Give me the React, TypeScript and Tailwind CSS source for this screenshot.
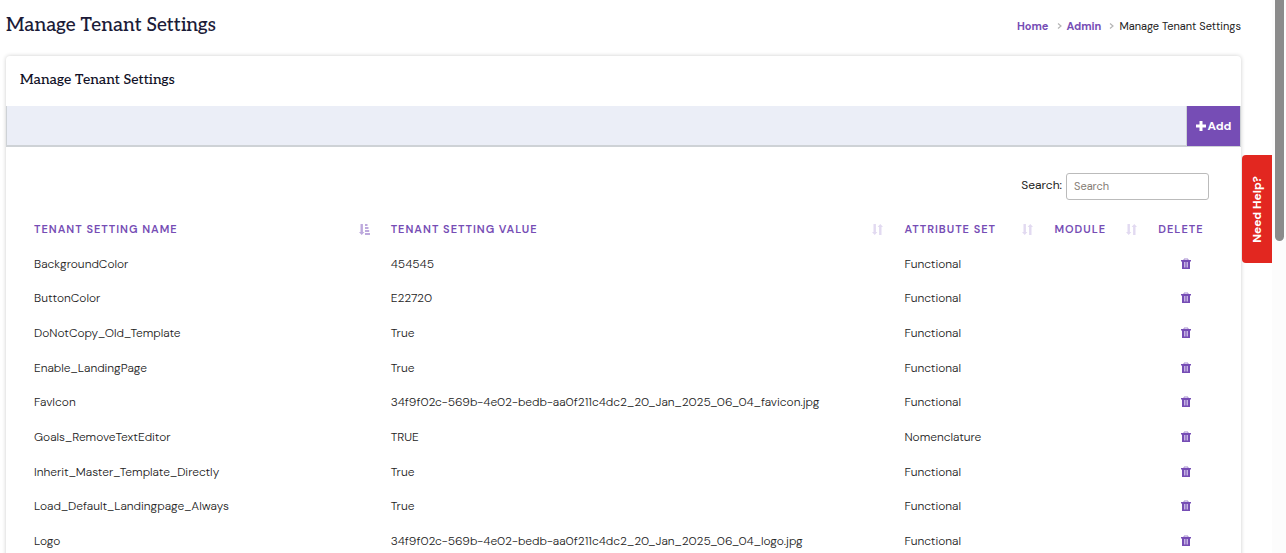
import React from 'react';

type Setting = { name: string; value: string; set: string };

const settings: Setting[] = [
  { name: 'BackgroundColor', value: '454545', set: 'Functional' },
  { name: 'ButtonColor', value: 'E22720', set: 'Functional' },
  { name: 'DoNotCopy_Old_Template', value: 'True', set: 'Functional' },
  { name: 'Enable_LandingPage', value: 'True', set: 'Functional' },
  { name: 'FavIcon', value: '34f9f02c-569b-4e02-bedb-aa0f211c4dc2_20_Jan_2025_06_04_favicon.jpg', set: 'Functional' },
  { name: 'Goals_RemoveTextEditor', value: 'TRUE', set: 'Nomenclature' },
  { name: 'Inherit_Master_Template_Directly', value: 'True', set: 'Functional' },
  { name: 'Load_Default_Landingpage_Always', value: 'True', set: 'Functional' },
  { name: 'Logo', value: '34f9f02c-569b-4e02-bedb-aa0f211c4dc2_20_Jan_2025_06_04_logo.jpg', set: 'Functional' },
];

function SortIcon({ active = false }: { active?: boolean }) {
  return (
    <svg viewBox="0 0 11 11" className={active ? 'h-[11px] w-[11px] text-[#bda9dd]' : 'h-[11px] w-[11px] text-[#e2daf1]'} fill="currentColor" aria-hidden="true">
      <path d="M1.500 0h2.400v8H5.400L2.700 11 0 8h1.500z" />
      {active ? (
        <path d="M6 0h2.500v2H6zM6 3h3.500v2H6zM6 6h4.200v2H6zM6 9h5v2H6z" />
      ) : (
        <path d="M7.100 11h2.400V3H11L8.300 0 5.600 3h1.500z" />
      )}
    </svg>
  );
}

function TrashIcon() {
  return (
    <svg viewBox="0 0 10 12" className="h-3 w-2.5" aria-hidden="true">
      <path d="M3 2V1h4v1" fill="none" stroke="#a58bd0" strokeWidth="1" />
      <path d="M0 2h10v1.500H9V11H1V3.500H0z" fill="#764db5" />
      <path d="M3.500 4v5.500M5 4v5.500M6.500 4v5.500" stroke="#dccff0" strokeWidth=".8" />
    </svg>
  );
}

function PlusIcon() {
  return (
    <svg viewBox="0 0 10 10" className="h-2.5 w-2.5" fill="currentColor" aria-hidden="true">
      <path d="M3.500 0h3v3.500H10v3H6.500V10h-3V6.500H0v-3h3.500z" />
    </svg>
  );
}

function Chevron() {
  return (
    <svg viewBox="0 0 6 8" className="mr-1 ml-2 h-2 w-1.5" fill="none" stroke="#b5b5b5" strokeWidth="1.2" aria-hidden="true">
      <path d="M1 1.500l3 2.500L1 6.500" />
    </svg>
  );
}

function Heading({ label, sort }: { label: string; sort?: 'active' | 'idle' }) {
  return (
    <th scope="col" className="h-[34px] p-0 text-left align-middle font-semibold">
      <span className="flex items-center justify-between pr-[21px]">
        {label}
        {sort && <SortIcon active={sort === 'active'} />}
      </span>
    </th>
  );
}

export default function App() {
  return (
    <div className="relative h-screen overflow-hidden bg-white pr-[45px] pl-1.5 font-['DM_Sans','Inter',sans-serif] text-xs text-[#444]">
      <header className="flex h-14 items-start justify-between pt-3">
        <h1 className="font-['Roboto_Slab','Aleo','DejaVu_Serif',serif] text-[19px] leading-7 font-medium text-[#1b1b38]">
          Manage Tenant Settings
        </h1>
        <nav aria-label="Breadcrumb" className="flex items-center pt-1.5 text-[11px] leading-4">
          <a href="#home" className="font-bold text-[#764db5]">Home</a>
          <Chevron />
          <a href="#admin" className="font-bold text-[#764db5]">Admin</a>
          <Chevron />
          <span className="text-[#222]">Manage Tenant Settings</span>
        </nav>
      </header>

      <main className="min-h-screen rounded-sm bg-white shadow-[0_0_4px_rgba(0,0,0,0.2)]">
        <h2 className="flex h-[50px] items-center px-3.5 pb-0.5 font-['Roboto_Slab','Aleo','DejaVu_Serif',serif] text-sm font-medium text-[#111127]">
          Manage Tenant Settings
        </h2>
        <div className="flex h-[41px] justify-end border-r border-b-2 border-l border-[#ced2d6] bg-[#ebeef7]">
          <button type="button" className="-mb-px flex w-[54px] items-center justify-center gap-0.5 border-l border-[#ced2d6] bg-[#764db5] font-bold text-white">
            <PlusIcon />
            Add
          </button>
        </div>

        <div className="pt-[26px] pr-[26px] pl-7">
          <div className="flex items-center justify-end gap-1 pr-1.5">
            <label htmlFor="search" className="pb-1 text-[#222]">Search:</label>
            <input
              id="search"
              type="search"
              placeholder="Search"
              className="h-[27px] w-[143px] rounded-[3px] border border-[#bbb] px-[7px] pb-0.5 text-[11px] placeholder:text-[#857d75]"
            />
          </div>
          <table className="mt-3 w-full table-fixed border-collapse">
            <colgroup>
              <col className="w-[30.2%]" />
              <col className="w-[43.5%]" />
              <col className="w-[12.7%]" />
              <col className="w-[8.8%]" />
              <col />
            </colgroup>
            <thead className="text-[11px] tracking-[1px] whitespace-nowrap text-[#764db5] uppercase">
              <tr>
                <Heading label="Tenant Setting Name" sort="active" />
                <Heading label="Tenant Setting Value" sort="idle" />
                <Heading label="Attribute Set" sort="idle" />
                <Heading label="Module" sort="idle" />
                <Heading label="Delete" />
              </tr>
            </thead>
            <tbody className="font-light text-[#222]">
              {settings.map((s) => (
                <tr key={s.name} className="h-[35px] [&:nth-child(3n+2)]:h-[34px]">
                  <td className="p-0">{s.name}</td>
                  <td className="p-0">{s.value}</td>
                  <td className="p-0">{s.set}</td>
                  <td className="p-0" />
                  <td className="p-0">
                    <button type="button" aria-label={`Delete ${s.name}`} className="ml-[23px] block">
                      <TrashIcon />
                    </button>
                  </td>
                </tr>
              ))}
            </tbody>
          </table>
        </div>
      </main>

      <button type="button" className="absolute top-[155px] right-3.5 flex h-[108px] w-[30px] items-center justify-center rounded-l-sm bg-[#e22720] font-bold text-white">
        <span className="rotate-180 [writing-mode:vertical-rl]">Need Help?</span>
      </button>
      <div className="absolute inset-y-0 right-0 w-3.5 bg-[#fcfcfc]" aria-hidden="true">
        <div className="ml-[3px] h-[241px] w-[9px] rounded-b-full bg-[#8b8b8b]" />
      </div>
    </div>
  );
}
